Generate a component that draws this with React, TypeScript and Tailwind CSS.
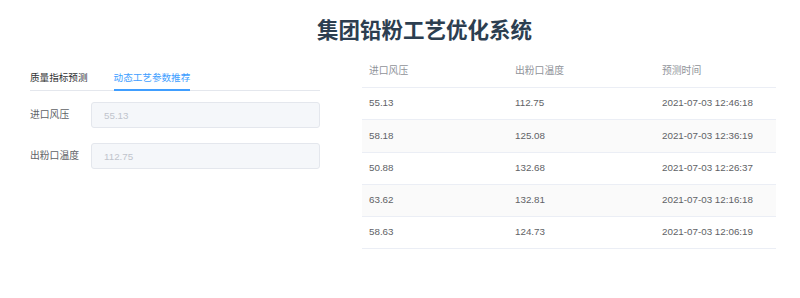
import React, { useState } from 'react';

const rows = [
  { pressure: '55.13', temp: '112.75', time: '2021-07-03 12:46:18' },
  { pressure: '58.18', temp: '125.08', time: '2021-07-03 12:36:19' },
  { pressure: '50.88', temp: '132.68', time: '2021-07-03 12:26:37' },
  { pressure: '63.62', temp: '132.81', time: '2021-07-03 12:16:18' },
  { pressure: '58.63', temp: '124.73', time: '2021-07-03 12:06:19' },
];

export default function App() {
  const [tab, setTab] = useState(1);

  return (
    <div className="w-[800px] h-[298px] bg-white overflow-hidden font-['Liberation_Sans','Noto_Sans_CJK_SC',sans-serif]">
      {/* Title */}
      <div className="flex justify-center pl-[49px] pt-[16px] h-[56px]">
        <h1 className="text-[21.5px] leading-[25px] font-bold text-[#2c3e50] font-['Noto_Sans_CJK_SC',sans-serif]">
          集团铅粉工艺优化系统
        </h1>
      </div>

      <div className="flex">
        {/* Left: tabs + form */}
        <div className="w-[290px] ml-[30px] pt-[10px]">
          <div className="flex h-[25px] border-b border-[#e4e7ed] text-[9.6px]">
            <button
              onClick={() => setTab(0)}
              className={`relative h-full pr-[13px] ${tab === 0 ? 'text-[#409eff]' : 'text-[#303133]'}`}
            >
              质量指标预测
              {tab === 0 && <span className="absolute left-0 right-[13px] -bottom-px h-[2px] bg-[#409eff]" />}
            </button>
            <button
              onClick={() => setTab(1)}
              className={`relative h-full px-[13px] ${tab === 1 ? 'text-[#409eff]' : 'text-[#303133]'}`}
            >
              动态工艺参数推荐
              {tab === 1 && <span className="absolute left-[13px] right-[13px] -bottom-px h-[2px] bg-[#409eff]" />}
            </button>
          </div>

          <div className="flex flex-col gap-[15px] mt-[11px]">
            <div className="flex items-center">
              <label className="w-[61px] text-[9.8px] text-[#606266]">进口风压</label>
              <input
                disabled
                value="55.13"
                className="w-[229px] h-[26px] px-[12px] rounded-[3px] border border-[#e4e7ed] bg-[#f5f7fa] text-[9.8px] text-[#c0c4cc]"
              />
            </div>
            <div className="flex items-center">
              <label className="w-[61px] text-[9.8px] text-[#606266]">出粉口温度</label>
              <input
                disabled
                value="112.75"
                className="w-[229px] h-[26px] px-[12px] rounded-[3px] border border-[#e4e7ed] bg-[#f5f7fa] text-[9.8px] text-[#c0c4cc]"
              />
            </div>
          </div>
        </div>

        {/* Right: history table */}
        <div className="w-[414px] ml-[42px] text-[9.8px]">
          <div className="grid grid-cols-[146px_147px_1fr] h-[32px] items-center border-b border-[#ebeef5] text-[#909399]">
            <div className="px-[7px]">进口风压</div>
            <div className="px-[7px]">出粉口温度</div>
            <div className="px-[7px]">预测时间</div>
          </div>
          {rows.map((r, i) => (
            <div
              key={i}
              className={`grid grid-cols-[146px_147px_1fr] h-[32.3px] items-center border-b border-[#ebeef5] text-[#606266] ${i % 2 === 1 ? 'bg-[#fafafa]' : 'bg-white'}`}
            >
              <div className="px-[7px]">{r.pressure}</div>
              <div className="px-[7px]">{r.temp}</div>
              <div className="px-[7px]">{r.time}</div>
            </div>
          ))}
        </div>
      </div>
    </div>
  );
}
